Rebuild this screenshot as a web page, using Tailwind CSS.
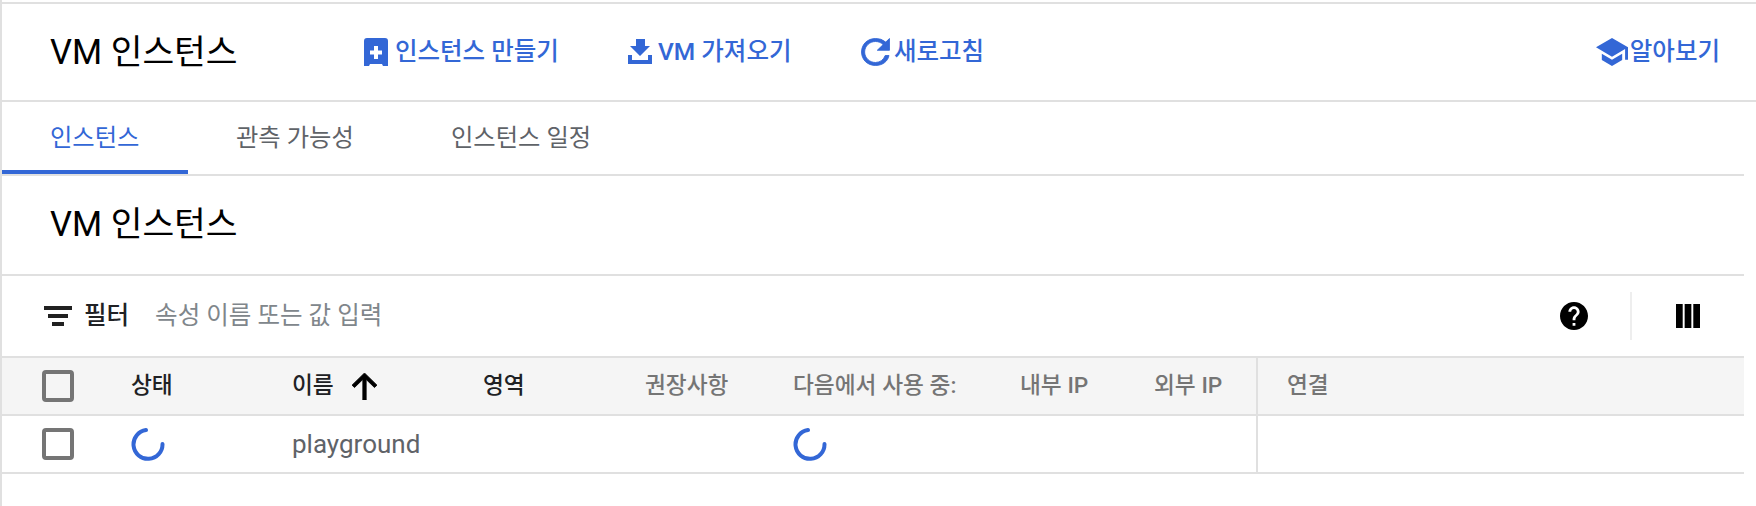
<!DOCTYPE html>
<html lang="ko">
<head>
  <meta charset="UTF-8">
  <title>VM 인스턴스</title>
  <script src="https://cdn.jsdelivr.net/npm/@tailwindcss/browser@4"></script>
</head>
<body class="bg-white font-['Roboto','Noto_Sans_CJK_KR',sans-serif] overflow-hidden">
  <div class="w-[1756px] h-[506px] pt-[2px] border-l-[2px] border-[#e0e0e0]">

    <!-- Toolbar -->
    <header class="h-[100px] flex items-center pl-[48px] pr-[36px] border-t-[2px] border-b-[2px] border-[#e0e0e0] text-[#3367d6] text-[24.5px]">
      <h1 class="w-[314px] pt-[2px] text-[34.5px] text-black">VM 인스턴스</h1>
      <a class="w-[263px] flex items-center gap-[7px]">
        <svg class="w-[24px] h-[28px]" viewBox="0 0 24 28"><path fill="#3367d6" fill-rule="evenodd" d="M3 0h18a3 3 0 0 1 3 3v25h-5l-1-2H6l-1 2H0V3a3 3 0 0 1 3-3zM10 8v4.500H6v4h4V21h4v-4.500h4v-4h-4V8z"/></svg>
        <span class="font-medium">인스턴스 만들기</span>
      </a>
      <a class="w-[234px] flex items-center gap-[5px]">
        <svg class="w-[26px] h-[26px]" viewBox="0 0 26 26"><path fill="#3367d6" d="M9 0h9v7h5L13 17 3 7h6zM1 16h4v5h16v-5h4v9H1z"/></svg>
        <span class="font-medium">VM 가져오기</span>
      </a>
      <a class="flex items-center gap-[4px]">
        <svg class="w-[29px] h-[28px]" viewBox="4 4 16 16" preserveAspectRatio="none"><path fill="#3367d6" stroke="#3367d6" stroke-width="0.5" d="M17.650 6.350A7.958 7.958 0 0 0 12 4.300c-4.420 0-7.700 3.280-7.700 7.700s3.280 7.700 7.700 7.700c3.730 0 6.840-2.250 7.430-5.700h-2.080A5.990 5.990 0 0 1 12 18c-3.310 0-6-2.690-6-6s2.690-6 6-6c1.660 0 3.140.69 4.220 1.780L13 11h6.700V4.300l-2.050 2.050z"/></svg>
        <span class="font-medium">새로고침</span>
      </a>
      <a class="ml-auto flex items-center gap-[2px]">
        <svg class="w-[32px] h-[28px]" viewBox="1 3 22 18" preserveAspectRatio="none"><path fill="#3367d6" d="M5 13.180v4L12 21l7-3.820v-4L12 17l-7-3.820zM12 3L1 9l11 6 9-4.910V17h2V9L12 3z"/></svg>
        <span class="font-medium">알아보기</span>
      </a>
    </header>

    <div class="w-[1742px]">
      <!-- Tabs -->
      <nav class="h-[74px] flex border-b-[2px] border-[#e0e0e0] text-[24.3px] text-[#5f6368]">
        <a class="w-[186px] pl-[48px] pt-[18px] border-b-[4px] border-[#3367d6] text-[#3367d6]">인스턴스</a>
        <a class="w-[215px] pl-[48px] pt-[18px]">관측 가능성</a>
        <a class="pl-[48px] pt-[18px]">인스턴스 일정</a>
      </nav>

      <!-- Section title -->
      <h2 class="h-[100px] flex items-center pl-[48px] text-[34.5px] text-black border-b-[2px] border-[#e0e0e0]">VM 인스턴스</h2>

      <!-- Filter bar -->
      <div class="h-[80px] flex items-center pl-[42px] text-[24.5px]">
        <svg class="w-[28px] h-[20px]" viewBox="0 0 28 20"><path fill="#212121" d="M0 0h28v4H0zM4 8h20v4H4zM8 16h12v4H8z"/></svg>
        <span class="ml-[12px] font-medium text-[#202124]">필터</span>
        <span class="ml-[26px] text-[#80868b]">속성 이름 또는 값 입력</span>
        <svg class="ml-auto w-[28px] h-[28px]" viewBox="2 2 20 20"><path d="M12 2C6.480 2 2 6.480 2 12s4.480 10 10 10 10-4.480 10-10S17.520 2 12 2zm1 17h-2v-2h2v2zm2.070-7.750l-.9.920C13.450 12.900 13 13.500 13 15h-2v-.5c0-1.100.45-2.100 1.170-2.830l1.240-1.260c.37-.36.59-.86.59-1.410 0-1.100-.9-2-2-2s-2 .9-2 2H8c0-2.210 1.790-4 4-4s4 1.790 4 4c0 .88-.36 1.680-.93 2.250z"/></svg>
        <div class="ml-[42px] w-[2px] h-[48px] bg-[#eeeeee]"></div>
        <svg class="ml-[44px] mr-[44px] w-[24px] h-[24px]" viewBox="0 0 24 24"><path d="M0 0h6.700v24H0zM8.650 0h6.700v24h-6.700zM17.300 0H24v24h-6.700z"/></svg>
      </div>

      <!-- Table -->
      <div class="grid grid-cols-[129px_161px_191px_162px_148px_227px_134px_102px_1fr] border-t-[2px] border-[#e0e0e0]">
        <div class="h-[58px] bg-[#f5f5f5] border-b-[2px] border-[#e0e0e0] flex items-center pl-[40px]">
          <div class="w-[32px] h-[32px] rounded-[4px] border-[4px] border-[#757575]"></div>
        </div>
        <div class="h-[58px] bg-[#f5f5f5] border-b-[2px] border-[#e0e0e0] flex items-center text-[22.7px] font-medium text-[#202124]">상태</div>
        <div class="h-[58px] bg-[#f5f5f5] border-b-[2px] border-[#e0e0e0] flex items-center gap-[18px] text-[22.7px] font-medium text-[#202124]">
          <span>이름</span>
          <svg class="w-[25px] h-[27px]" viewBox="0 0 24 26"><path stroke="#000" stroke-width="0.8" d="M10.400 26V6.200L2.400 14 0 11.700 12 0l12 11.700-2.400 2.300-8-7.800V26z"/></svg>
        </div>
        <div class="h-[58px] bg-[#f5f5f5] border-b-[2px] border-[#e0e0e0] flex items-center text-[22.7px] font-medium text-[#202124]">영역</div>
        <div class="h-[58px] bg-[#f5f5f5] border-b-[2px] border-[#e0e0e0] flex items-center text-[22.7px] font-medium text-[#757575]">권장사항</div>
        <div class="h-[58px] bg-[#f5f5f5] border-b-[2px] border-[#e0e0e0] flex items-center text-[22.7px] font-medium text-[#757575]">다음에서 사용 중:</div>
        <div class="h-[58px] bg-[#f5f5f5] border-b-[2px] border-[#e0e0e0] flex items-center text-[22.7px] font-medium text-[#757575]">내부 IP</div>
        <div class="h-[58px] bg-[#f5f5f5] border-b-[2px] border-[#e0e0e0] flex items-center text-[22.7px] font-medium text-[#757575]">외부 IP</div>
        <div class="h-[58px] bg-[#f5f5f5] border-b-[2px] border-l-[2px] border-[#e0e0e0] flex items-center pl-[29px] text-[22.7px] font-medium text-[#757575]">연결</div>

        <div class="h-[58px] border-b-[2px] border-[#e0e0e0] flex items-center pl-[40px]">
          <div class="w-[32px] h-[32px] rounded-[4px] border-[4px] border-[#757575]"></div>
        </div>
        <div class="h-[58px] border-b-[2px] border-[#e0e0e0] flex items-center">
          <svg class="w-[34px] h-[34px]" viewBox="0 0 34 34"><path fill="none" stroke="#3367d6" stroke-width="4" stroke-linecap="round" d="M15 3A14.500 14.500 0 1 0 31.500 17"/></svg>
        </div>
        <div class="col-span-3 h-[58px] border-b-[2px] border-[#e0e0e0] flex items-center text-[26px] text-[#5f6368]">playground</div>
        <div class="col-span-3 h-[58px] border-b-[2px] border-[#e0e0e0] flex items-center">
          <svg class="w-[34px] h-[34px]" viewBox="0 0 34 34"><path fill="none" stroke="#3367d6" stroke-width="4" stroke-linecap="round" d="M15 3A14.500 14.500 0 1 0 31.500 17"/></svg>
        </div>
        <div class="h-[58px] border-b-[2px] border-l-[2px] border-[#e0e0e0]"></div>
      </div>
    </div>
  </div>
</body>
</html>
